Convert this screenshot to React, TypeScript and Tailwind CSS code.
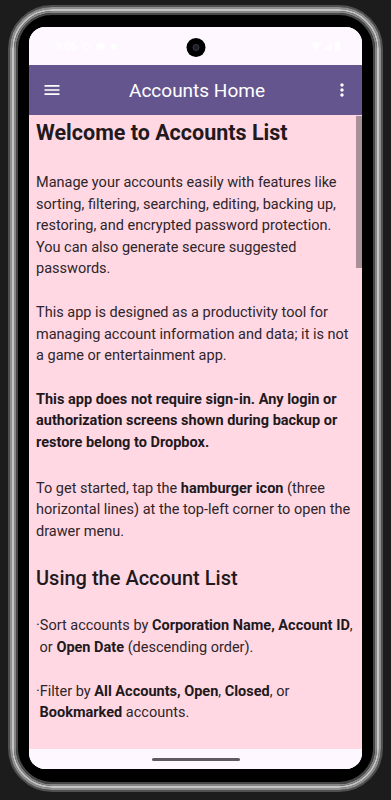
import React from 'react';

const MenuIcon = () => (
  <svg viewBox="0 0 24 24" className="w-[20px] h-[20px] fill-white">
    <path d="M3 18h18v-2H3v2zm0-5h18v-2H3v2zm0-7v2h18V6H3z" />
  </svg>
);

const MoreIcon = () => (
  <svg viewBox="0 0 24 24" className="w-[20px] h-[20px] fill-white">
    <path d="M12 8c1.1 0 2-.9 2-2s-.9-2-2-2-2 .9-2 2 .9 2 2 2zm0 2c-1.1 0-2 .9-2 2s.9 2 2 2 2-.9 2-2-.9-2-2-2zm0 6c-1.1 0-2 .9-2 2s.9 2 2 2 2-.9 2-2-.9-2-2-2z" />
  </svg>
);

const StatusBar = () => (
  <div className="relative h-[38px] shrink-0 bg-[#fef7ff] flex items-center justify-between pl-[26px] pr-[22px]">
    <div className="flex items-center gap-[5px] text-white">
      <span className="text-[11px] font-medium leading-none">3:06</span>
      <svg viewBox="0 0 12 12" className="w-[9px] h-[9px] fill-none stroke-white">
        <circle cx="6" cy="6" r="4.5" strokeWidth="1.4" />
      </svg>
      <svg viewBox="0 0 12 12" className="w-[9px] h-[9px] fill-white">
        <rect x="1" y="2" width="10" height="8" rx="1" />
      </svg>
      <svg viewBox="0 0 12 12" className="w-[8px] h-[9px] fill-white">
        <rect x="2" y="3" width="8" height="8" rx="1" />
      </svg>
    </div>
    {/* camera cutout */}
    <div className="absolute left-1/2 top-[11px] -translate-x-1/2 w-[19px] h-[19px] rounded-full bg-black flex items-center justify-center">
      <div className="w-[7px] h-[7px] rounded-full bg-[#1e1e2a] border border-[#3a3a48]" />
    </div>
    <div className="flex items-center gap-[3px]">
      <svg viewBox="0 0 12 10" className="w-[10px] h-[8px] fill-white">
        <path d="M0 2 Q6 -2 12 2 L6 10 Z" />
      </svg>
      <svg viewBox="0 0 10 10" className="w-[8px] h-[8px] fill-white">
        <path d="M10 0 L10 10 L0 10 Z" />
      </svg>
      <svg viewBox="0 0 6 12" className="w-[5px] h-[10px] fill-white">
        <rect x="0" y="1" width="6" height="11" rx="1" />
      </svg>
    </div>
  </div>
);

const AppBar = () => (
  <div className="h-[50px] shrink-0 bg-[#65558f] flex items-center pl-[13px] pr-[10px]">
    <MenuIcon />
    <div className="flex-1 text-center text-white text-[19px] leading-none">Accounts Home</div>
    <MoreIcon />
  </div>
);

export default function App() {
  return (
    <div className="w-[391px] h-[800px] bg-[#1c1c1c] px-[8px] pt-[5px] pb-[8px] font-['Roboto',sans-serif]">
      {/* metallic phone frame */}
      <div className="h-full rounded-[44px] border-2 border-[#505050]">
        <div className="h-full rounded-[42px] border-2 border-[#8f8f8f]">
          <div className="h-full rounded-[40px] border-2 border-[#c4c4c4]">
            <div className="h-full rounded-[38px] border-2 border-[#858585]">
              <div className="h-full rounded-[36px] border-2 border-[#474747] bg-black pt-[12px] pb-[13px] px-[11px] flex flex-col">
                <div className="flex-1 rounded-[16px] overflow-hidden flex flex-col bg-[#fef7ff]">
                  <StatusBar />
                  <AppBar />

                  <div className="relative flex-1 overflow-hidden bg-[#ffd8e4] pl-[7px] pt-[4px] text-[14.5px] leading-[21.6px] text-[#2e2529] whitespace-nowrap">
                    <h1 className="text-[21.5px] leading-[28px] font-bold text-[#22191c]">Welcome to Accounts List</h1>

                    <p className="mt-[25px]">
                      Manage your accounts easily with features like<br />
                      sorting, filtering, searching, editing, backing up,<br />
                      restoring, and encrypted password protection.<br />
                      You can also generate secure suggested<br />
                      passwords.
                    </p>

                    <p className="mt-[22px]">
                      This app is designed as a productivity tool for<br />
                      managing account information and data; it is not<br />
                      a game or entertainment app.
                    </p>

                    <p className="mt-[22px] font-bold text-[#22191c]">
                      This app does not require sign-in. Any login or<br />
                      authorization screens shown during backup or<br />
                      restore belong to Dropbox.
                    </p>

                    <p className="mt-[24px]">
                      To get started, tap the <b className="text-[#22191c]">hamburger icon</b> (three<br />
                      horizontal lines) at the top-left corner to open the<br />
                      drawer menu.
                    </p>

                    <h2 className="mt-[23px] text-[20px] leading-[26px] font-medium text-[#22191c]">Using the Account List</h2>

                    <p className="mt-[24px]">
                      ·Sort accounts by <b className="text-[#22191c]">Corporation Name, Account ID</b>,<br />
                      &nbsp;or <b className="text-[#22191c]">Open Date</b> (descending order).
                    </p>

                    <p className="mt-[22px]">
                      ·Filter by <b className="text-[#22191c]">All Accounts, Open</b>, <b className="text-[#22191c]">Closed</b>, or<br />
                      &nbsp;<b className="text-[#22191c]">Bookmarked</b> accounts.
                    </p>

                    {/* scrollbar thumb */}
                    <div className="absolute right-0 top-[1px] w-[6px] h-[152px] bg-[#a98f98]" />
                  </div>

                  <div className="h-[20px] shrink-0 bg-[#fef7ff] flex items-center justify-center">
                    <div className="w-[88px] h-[3px] rounded-full bg-[#5e5a5f]" />
                  </div>
                </div>
              </div>
            </div>
          </div>
        </div>
      </div>
    </div>
  );
}
